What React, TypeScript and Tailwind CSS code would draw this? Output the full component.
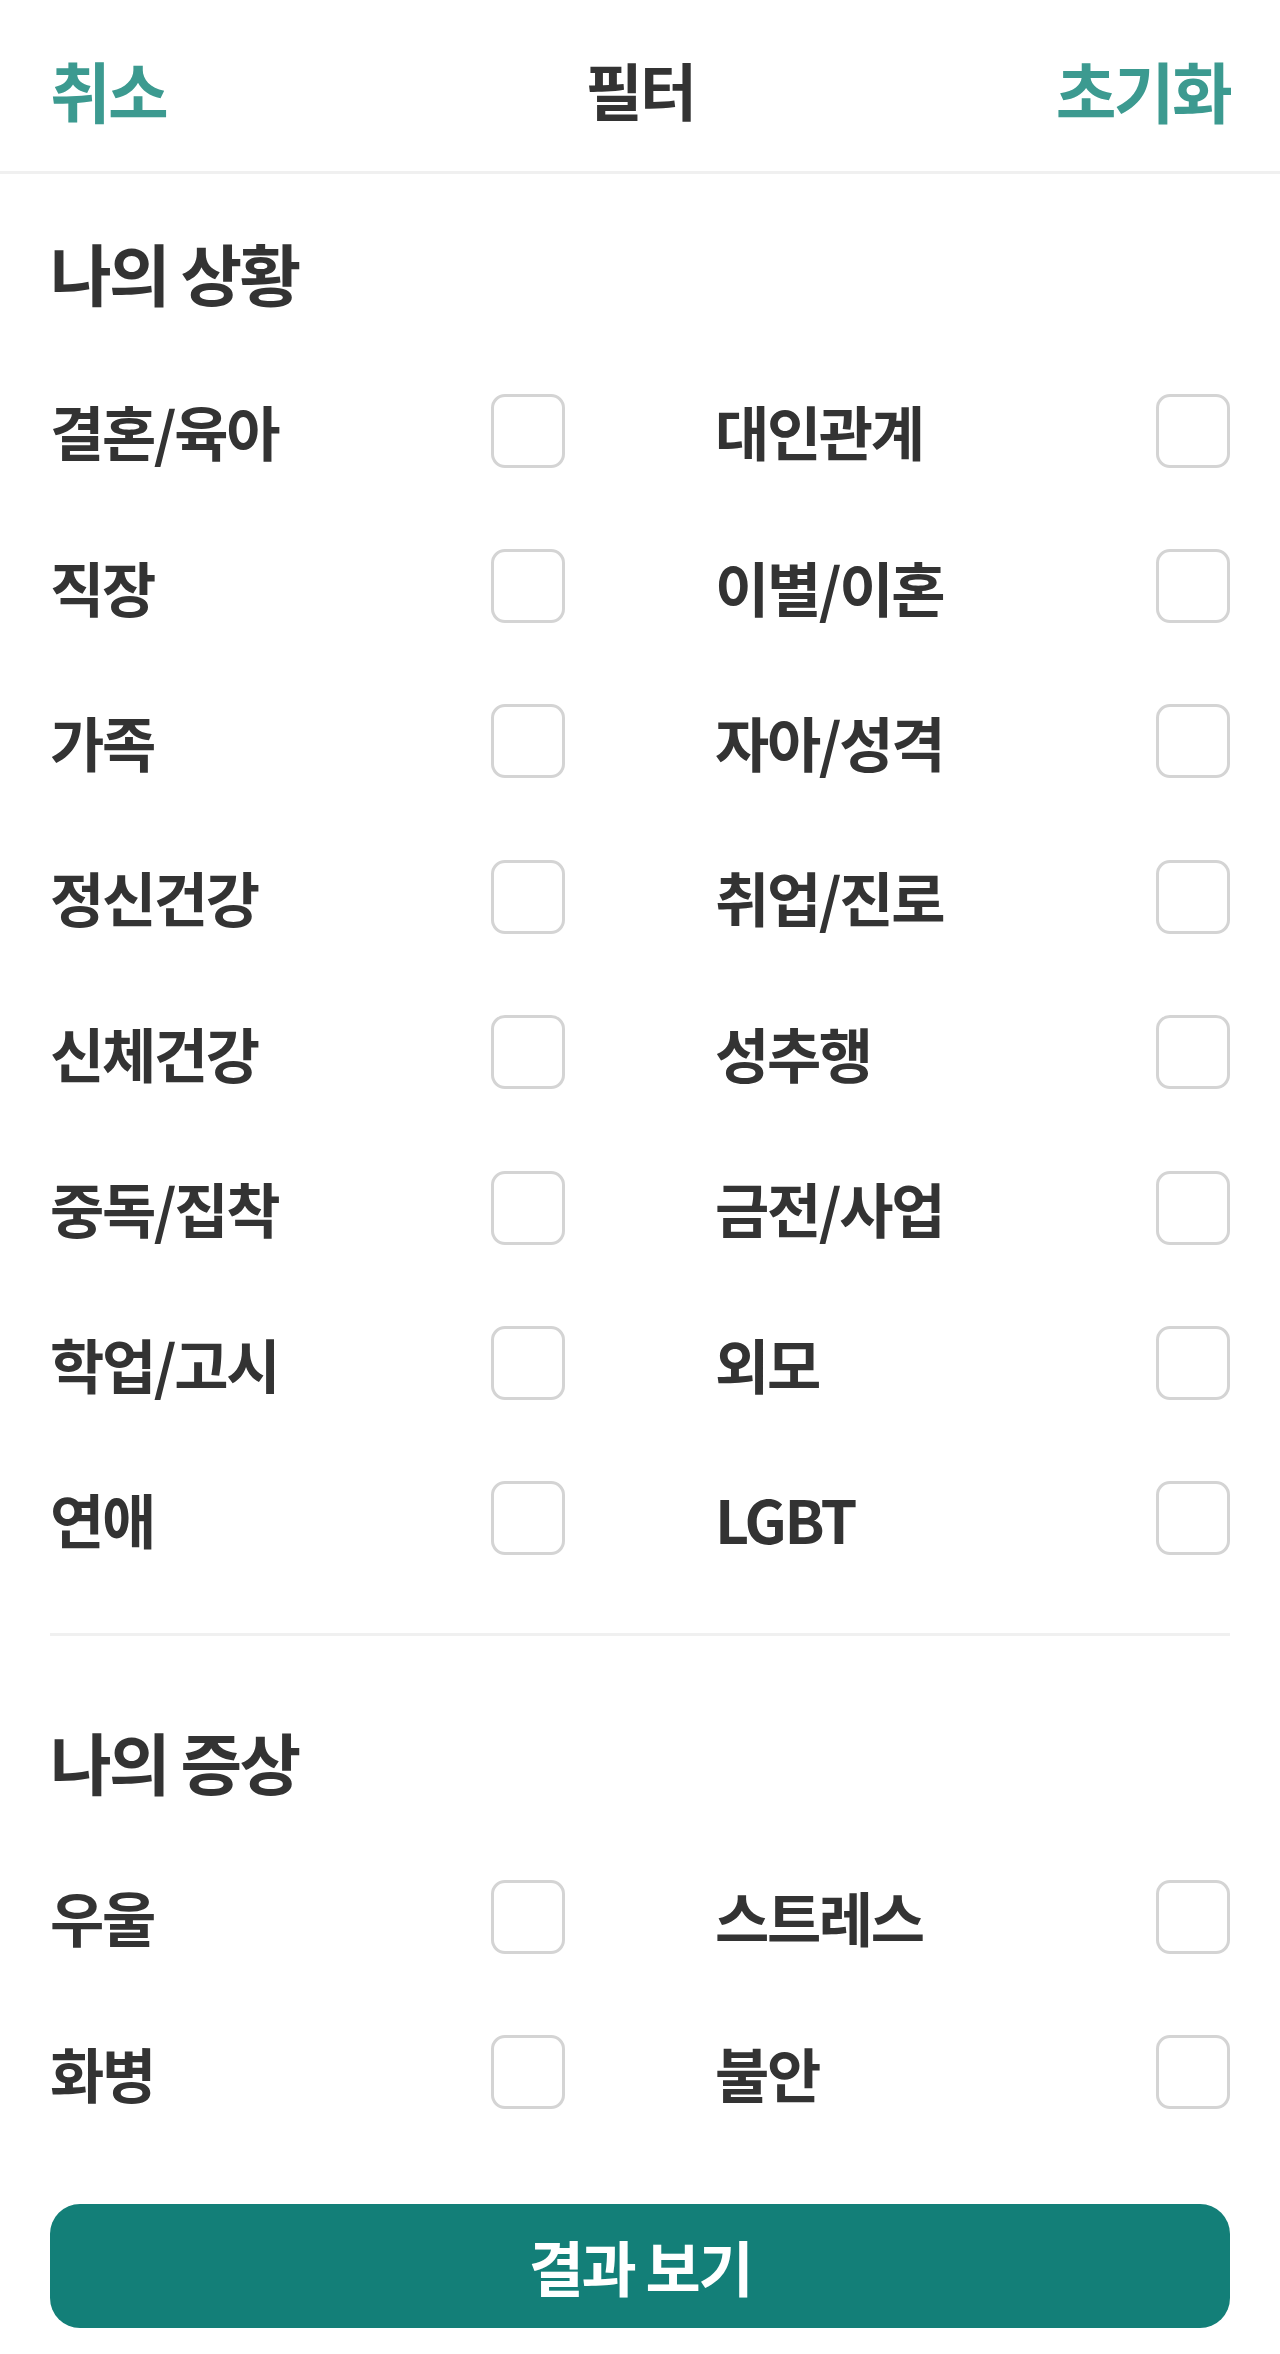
import React from 'react';

const situations = [
  '결혼/육아', '대인관계',
  '직장', '이별/이혼',
  '가족', '자아/성격',
  '정신건강', '취업/진로',
  '신체건강', '성추행',
  '중독/집착', '금전/사업',
  '학업/고시', '외모',
  '연애', 'LGBT',
];

const symptoms = ['우울', '스트레스', '화병', '불안'];

const font = { fontFamily: '"Noto Sans CJK KR", "Noto Sans", sans-serif' };

const CheckRow = ({ label }: { label: string }) => (
  <label className="h-[155.4px] flex items-center justify-between cursor-pointer">
    <span className="text-[59px] font-bold leading-none tracking-[-0.04em] text-[#333333]">{label}</span>
    <span className="w-[74px] h-[74px] rounded-[14px] border-[3px] border-[#d4d4d4] bg-white" />
  </label>
);

const App: React.FC = () => {
  return (
    <div className="w-[1280px] min-h-[2354px] bg-white" style={font}>
      <header className="h-[174px] px-[50px] pt-[6px] grid grid-cols-3 items-center border-b-[3px] border-[#f0f0f0]">
        <button className="justify-self-start text-[66px] font-bold leading-none tracking-[-0.04em] text-[#3c9a90]">취소</button>
        <h1 className="justify-self-center text-[62px] font-bold leading-none tracking-[-0.04em] text-[#333333]">필터</h1>
        <button className="justify-self-end text-[66px] font-bold leading-none tracking-[-0.04em] text-[#3c9a90]">초기화</button>
      </header>

      <section className="px-[50px]">
        <h2 className="mt-[64px] text-[67px] font-bold leading-none tracking-[-0.04em] text-[#333333]">나의 상황</h2>
        <div className="mt-[48px] grid grid-cols-2 gap-x-[150px]">
          {situations.map((s) => (
            <CheckRow key={s} label={s} />
          ))}
        </div>
      </section>

      <div className="mx-[50px] mt-[37px] h-[3px] bg-[#f0f0f0]" />

      <section className="px-[50px]">
        <h2 className="mt-[91px] text-[67px] font-bold leading-none tracking-[-0.04em] text-[#333333]">나의 증상</h2>
        <div className="mt-[45px] grid grid-cols-2 gap-x-[150px]">
          {symptoms.map((s) => (
            <CheckRow key={s} label={s} />
          ))}
        </div>
      </section>

      <div className="px-[50px] pt-[54px] pb-[26px]">
        <button className="w-full h-[124px] rounded-[30px] bg-[#137f78] text-white text-[60px] font-bold leading-none tracking-[-0.04em]">
          결과 보기
        </button>
      </div>
    </div>
  );
};

export default App;
